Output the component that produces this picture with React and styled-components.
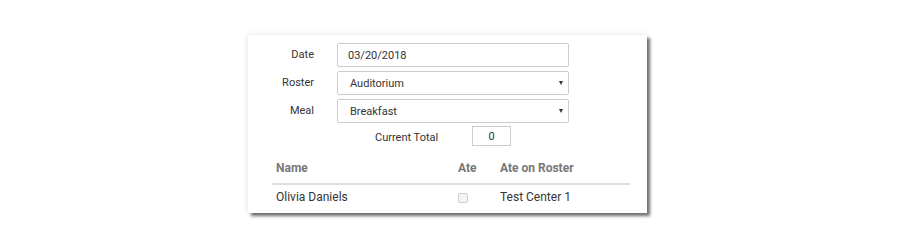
import React from 'react';
import styled, { createGlobalStyle } from 'styled-components';

const Global = createGlobalStyle`
  body {
    margin: 0;
    background: #fff;
    font-family: Roboto, 'Liberation Sans', Arial, sans-serif;
  }
`;

const Page = styled.div`
  width: 900px;
  height: 250px;
  padding: 35px 0 0 248px;
  box-sizing: border-box;
`;

const Card = styled.div`
  width: 399px;
  height: 178px;
  background: #fff;
  box-sizing: border-box;
  padding-top: 8px;
  box-shadow: 0 0 6px rgba(0, 0, 0, 0.12), 3px 3px 3px rgba(0, 0, 0, 0.55);
`;

const Form = styled.div`
  display: grid;
  grid-template-columns: 66px 232px;
  column-gap: 23px;
  row-gap: 4px;
  align-items: center;
`;

const Label = styled.label`
  text-align: right;
  font-size: 11px;
  color: #333;
  padding-bottom: 1px;
`;

const Field = styled.div`
  position: relative;
  height: 24px;
  border: 1px solid #ccc;
  border-radius: 2px;
  box-sizing: border-box;
  display: flex;
  align-items: center;
  padding-left: ${(p) => (p.$select ? '12px' : '10px')};
  font-size: 11px;
  color: #333;
`;

const Caret = styled.span`
  position: absolute;
  right: 5px;
  top: 9px;
  width: 0;
  height: 0;
  border-left: 2px solid transparent;
  border-right: 2px solid transparent;
  border-top: 4px solid #333;
`;

const TotalRow = styled.div`
  display: flex;
  align-items: center;
  padding-left: 127px;
  margin-top: 3px;
  gap: 34px;
`;

const TotalLabel = styled.span`
  font-size: 11px;
  color: #333;
  padding-top: 3px;
`;

const TotalBox = styled.div`
  width: 39px;
  height: 20px;
  border: 1px solid #ccc;
  box-sizing: border-box;
  display: flex;
  align-items: center;
  justify-content: center;
  font-size: 11px;
  color: #333;
`;

const Table = styled.table`
  margin: 7px 0 0 24px;
  width: 358px;
  table-layout: fixed;
  border-collapse: collapse;
  font-size: 12px;
`;

const Th = styled.th`
  text-align: left;
  font-weight: bold;
  color: #777;
  padding: 8px 4px 8px;
  border-bottom: 2px solid #ddd;
  width: ${(p) => p.$w || 'auto'};
`;

const Td = styled.td`
  color: #333;
  padding: 5px 4px;
  height: 14px;
`;

const Check = styled.span`
  display: inline-block;
  width: 8px;
  height: 8px;
  border: 1px solid #ccc;
  border-radius: 2px;
  background: #f4f4f4;
  vertical-align: middle;
`;

export default function App() {
  return (
    <Page>
      <Global />
      <Card>
        <Form>
          <Label>Date</Label>
          <Field>03/20/2018</Field>
          <Label>Roster</Label>
          <Field $select>
            Auditorium
            <Caret />
          </Field>
          <Label>Meal</Label>
          <Field $select>
            Breakfast
            <Caret />
          </Field>
        </Form>
        <TotalRow>
          <TotalLabel>Current Total</TotalLabel>
          <TotalBox>0</TotalBox>
        </TotalRow>
        <Table>
          <thead>
            <tr>
              <Th $w="174px">Name</Th>
              <Th $w="34px">Ate</Th>
              <Th>Ate on Roster</Th>
            </tr>
          </thead>
          <tbody>
            <tr>
              <Td>Olivia Daniels</Td>
              <Td>
                <Check />
              </Td>
              <Td>Test Center 1</Td>
            </tr>
          </tbody>
        </Table>
      </Card>
    </Page>
  );
}
